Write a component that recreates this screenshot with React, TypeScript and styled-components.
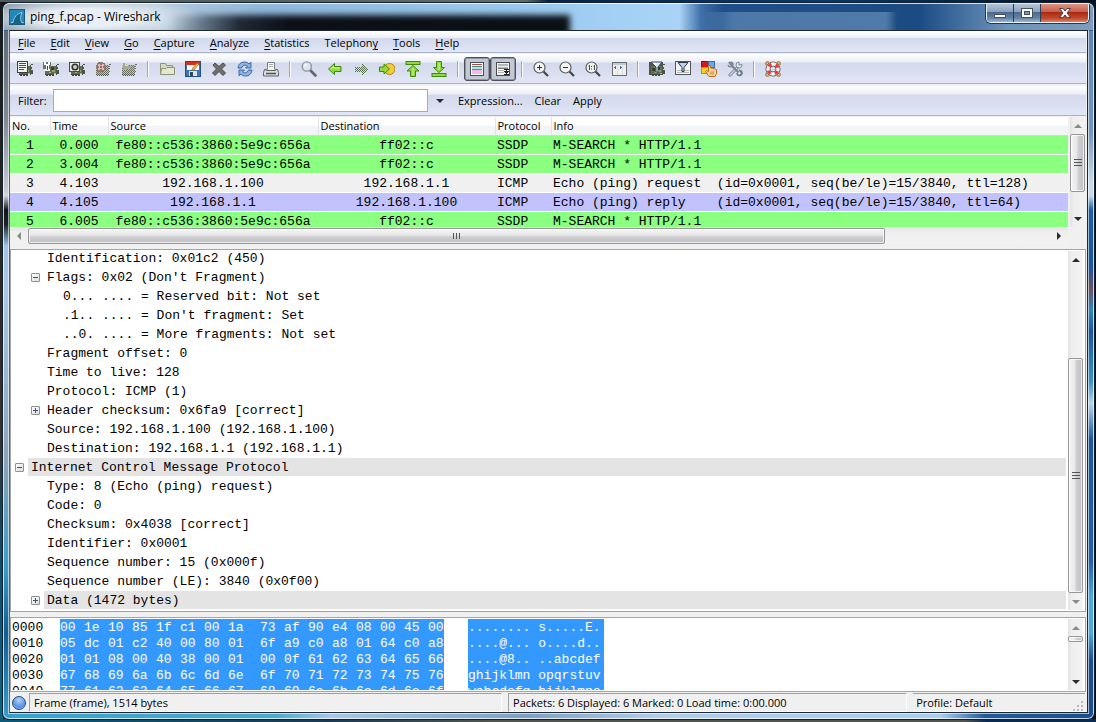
import React from "react";
import styled, { createGlobalStyle, css } from "styled-components";

const ui = `"Open Sans", "Noto Sans", sans-serif`;
const mono = `"Liberation Mono", "Courier New", monospace`;

const GlobalStyle = createGlobalStyle`
  * { box-sizing: border-box; }
  body { margin: 0; background: #05080f; font: 11px/16px ${ui}; color: #000; }
  button, input { font: inherit; color: inherit; }
`;

/* ---------- window frame ---------- */

const Desktop = styled.div`
  height: 100vh;
  min-height: 480px;
  padding: 2px 1px 2px 2px;
  background:
    linear-gradient(90deg, #4d5a5c, #5f6c6c 48%, #04234a 50%, #0a3a6a 75%, #03101f) 0 0 / 100% 2px no-repeat,
    linear-gradient(90deg, #0a5a78, #1b3a52 30%, #50564f 45%, #50564f 88%, #0a2a50 90%) 0 100% / 100% 3px no-repeat,
    linear-gradient(#1a1a1a, #333 60%, #0d4d6d 78%, #0b6484) 0 0 / 3px 100% no-repeat,
    #061022;
`;

const Window = styled.div`
  height: 100%;
  display: flex;
  flex-direction: column;
  padding: 0 6px 6px 6px;
  border: 1px solid #16202b;
  border-radius: 7px;
  box-shadow: inset 0 0 0 1px rgba(255, 255, 255, 0.75);
  background:
    linear-gradient(#5f6b78, #7e8892 12%, #c2c9d1 22%, #cfd6de 23%, #10141b 25%, #1a222c 27%, #9fc3e4 30%, #a9c8e6 36%, #8aa4ba 60%, #3c9cc9 75%, #0d5f94 84%, #48b0dc) 0 28px / 9px 100% no-repeat,
    linear-gradient(#5f86b0, #7496bd 14%, #c8d8ea 21%, #c8d8ea 23%, #1b5ea2 25%, #1b5799 33%, #6a5060 36%, #2f86b8 39%, #1b5799 42%, #3a93c4 49%, #b8d4ea 52%, #1d579a 57%, #2460a8 74%, #4fa8d8 79%, #4fa8d8 84%, #1b4f8c 88%) 100% 28px / 9px 100% no-repeat,
    linear-gradient(90deg, #2fa6d0, #49a9d0 25%, #a4c8e6 30%, #7ba1c0 48%, #b0cdea 60%, #a8cdf0 86%, #1f5c9c 90%, #1b4f8c) 0 100% / 100% 12px no-repeat,
    #345f92;
`;

const TitleBar = styled.header`
  position: relative;
  flex: none;
  height: 27px;
  margin: 0 -5px;
  padding: 0 4px 0 5px;
  display: flex;
  align-items: center;
  gap: 5px;
  overflow: hidden;
  border-top: 1px solid rgba(255, 255, 255, 0.8);
  border-radius: 6px 6px 0 0;
  background:
    radial-gradient(ellipse 120px 22px at 82px 14px, rgba(236, 242, 248, 0.95) 40%, rgba(226, 235, 244, 0) 100%),
    linear-gradient(90deg, transparent 64%, rgba(122, 160, 198, 0.5) 67%, rgba(122, 160, 198, 0.55) 81%, transparent 82%) 0 100% / 100% 18px no-repeat,
    linear-gradient(90deg, #7d8c9a, #b4c8da 14%, #8fb8dc 24%, #9ccbef 50%, #a9d4f7 62%, #3f70a8 64%, #1f4f8a 66%, #1c4b84 84%, #6c93bb 92%, #7f9cba);
  &::after {
    content: "";
    position: absolute;
    inset: 11px 48% -8px 15%;
    background: linear-gradient(90deg, rgba(11, 16, 23, 0), rgba(11, 16, 23, 0.85) 18%, #0b1017 30%);
    filter: blur(3px);
  }
`;

const Title = styled.h1`
  position: relative;
  z-index: 1;
  margin: 0;
  font: 12px/16px ${ui};
`;

const Captions = styled.div`
  margin-left: auto;
  align-self: flex-start;
  display: flex;
  height: 20px;
  margin-top: -1px;
  border: 1px solid #e8f0f8;
  border-top: 0;
  border-radius: 0 0 5px 5px;
  box-shadow: 0 0 0 1px #26374c;
  overflow: hidden;
`;

const CaptionButton = styled.button<{ $close?: boolean }>`
  width: ${(p) => (p.$close ? 47 : 27)}px;
  padding: 0;
  display: grid;
  place-items: center;
  border: 0;
  border-right: ${(p) => (p.$close ? 0 : 1)}px solid #2a3d54;
  background: ${(p) =>
    p.$close
      ? "linear-gradient(#dd9c8e, #c9604a 45%, #a92a12 50%, #c04a2c 80%, #e0806a)"
      : "linear-gradient(#b9c9da, #8ba3bd 45%, #4c6a8c 50%, #6585a8 80%, #9db8d4)"};
`;

const Client = styled.main`
  flex: 1;
  min-height: 0;
  display: flex;
  flex-direction: column;
  border: 1px solid #1d2733;
  border-left-color: #55606c;
  outline: 1px solid rgba(255, 255, 255, 0.6);
  background: #f0f0f0;
  padding: 0 1px 0 0;
`;

/* ---------- bars ---------- */

const barSkin = css`
  flex: none;
  display: flex;
  align-items: center;
  border-bottom: 1px solid #a9b2c8;
  background: linear-gradient(#ffffff, #e9edf6 29%, #d3d9ec 30%, #d8deef 60%, #e1e7f6);
`;

const MenuBar = styled.nav`
  ${barSkin}
  height: 22px;
  padding: 2px 0 0 1px;
  gap: 1px;
  border-top: 1px solid #fff;
`;

const MenuItem = styled.button`
  padding: 0 7px;
  border: 0;
  background: none;
  line-height: 18px;
  u { text-underline-offset: 2px; }
`;

const ToolBar = styled.div`
  ${barSkin}
  height: 30px;
  margin-top: 1px;
  padding: 1px 0 0 2px;
`;

const ToolButton = styled.button<{ $pressed?: boolean }>`
  width: 26px;
  height: 24px;
  padding: 0;
  display: grid;
  place-items: center;
  border: ${(p) => (p.$pressed ? "1px solid #4c5058" : "0")};
  border-radius: 3px;
  background: ${(p) => (p.$pressed ? "#c3c8d6" : "none")};
  box-shadow: ${(p) => (p.$pressed ? "inset 0 0 0 1px #8f95a3" : "none")};
  svg { display: block; }
`;

const Separator = styled.span`
  width: 2px;
  height: 16px;
  margin: 0 5px;
  border-left: 1px solid #a3a5ad;
  border-right: 1px solid #fff;
`;

const FilterBar = styled.form`
  ${barSkin}
  height: 30px;
  margin-top: 2px;
  padding: 0 0 0 8px;
`;

const FilterLabel = styled.label`
  width: 35px;
`;

const FilterInput = styled.input`
  flex: 0 1 375px;
  min-width: 80px;
  height: 23px;
  border: 1px solid #a9aab0;
  border-radius: 0;
  padding: 0 4px;
  background: #fff;
`;

const FilterButton = styled.button`
  padding: 0 6px;
  border: 0;
  background: none;
`;

const DropButton = styled(FilterButton)`
  width: 24px;
  display: grid;
  place-items: center;
`;

/* ---------- scroll bars ---------- */

const VBar = styled.div`
  flex: none;
  width: 15px;
  display: flex;
  flex-direction: column;
  background: linear-gradient(90deg, #e3e3e3, #eeeeee 25%, #f2f2f2);
`;

const HBar = styled.div`
  flex: none;
  height: 16px;
  display: flex;
  background: linear-gradient(#e6e6e6, #eeeeee 25%, #f2f2f2);
`;

const ScrollArrow = styled.button`
  flex: none;
  width: 18px;
  height: 17px;
  padding: 0;
  border: 0;
  display: grid;
  place-items: center;
  background: none;
  align-self: center;
`;

const Thumb = styled.div<{ $vertical?: boolean; $grow?: number }>`
  flex: ${(p) => p.$grow ?? 0} 0 ${(p) => (p.$grow ? 0 : 6)}px;
  display: grid;
  place-items: center;
  border: 1px solid #979797;
  border-radius: 2px;
  box-shadow: inset 0 0 0 1px rgba(255, 255, 255, 0.7);
  background: linear-gradient(${(p) => (p.$vertical ? "90deg" : "180deg")}, #f5f5f5, #e6e6e7 45%, #d0d0d3 55%, #bfbfc4);
`;

const Track = styled.div<{ $grow: number }>`
  flex: ${(p) => p.$grow} 0 0;
`;

const Arrow = ({ dir, dim }: { dir: "up" | "down" | "left" | "right"; dim?: boolean }) => {
  const d = {
    up: "M0 6L4 2L8 6Z",
    down: "M0 2L4 6L8 2Z",
    left: "M6 0L2 4L6 8Z",
    right: "M2 0L6 4L2 8Z",
  }[dir];
  return (
    <svg width="8" height="8" viewBox="0 0 8 8">
      <path d={d} fill={dim ? "#8a8a8a" : "#2b2b2b"} />
    </svg>
  );
};

const Grip = ({ vertical }: { vertical?: boolean }) => (
  <svg width="8" height="8" viewBox="0 0 8 8" shapeRendering="crispEdges">
    {[0, 3, 6].map((n) =>
      vertical ? (
        <path key={n} d={`M0 ${n}.5h8`} stroke="#555" />
      ) : (
        <path key={n} d={`M${n}.5 1v6`} stroke="#555" />
      )
    )}
  </svg>
);

/* ---------- packet list ---------- */

const PacketArea = styled.section`
  flex: none;
  margin-top: 1px;
  padding-right: 1px;
  display: flex;
  gap: 2px;
  height: 110px;
`;

const PacketClip = styled.div`
  flex: 1;
  min-width: 0;
  overflow: hidden;
  background: #fff;
`;

const PacketTable = styled.table`
  width: 100%;
  table-layout: fixed;
  border-collapse: collapse;
  th {
    height: 18px;
    padding: 0 2px;
    font-weight: normal;
    text-align: left;
    border-right: 1px solid #e2e3e6;
    border-bottom: 1px solid #d5d5d5;
    background: linear-gradient(#fff 45%, #f3f4f6 50%, #f3f4f6);
  }
  th:last-child { border-right: 0; }
  td {
    height: 19px;
    padding: 2px 2px 0;
    border-bottom: 1px solid #fff;
    font: 13px/16px ${mono};
    white-space: pre;
    overflow: hidden;
  }
  td:nth-child(-n + 4) { text-align: center; padding: 2px 0 0; }
`;

const PacketRow = styled.tr<{ $tone: string }>`
  background: ${(p) => p.$tone};
`;

const HScrollRow = styled.div`
  flex: none;
  padding: 1px 18px 0 0;
`;

/* ---------- panes ---------- */

const Pane = styled.section`
  display: flex;
  border: 1px solid #a4a5ab;
  background: #fff;
  overflow: hidden;
  padding: 1px 2px 1px 0;
`;

const TreePane = styled(Pane)`
  flex: 1;
  min-height: 0;
  margin-top: 5px;
`;

const HexPane = styled(Pane)`
  flex: none;
  height: 75px;
  margin-top: 5px;
`;

const TreeList = styled.ul`
  flex: 1;
  min-width: 0;
  margin: 0 2px 0 0;
  padding: 0;
  list-style: none;
  display: flex;
  flex-direction: column;
  justify-content: flex-end;
  overflow: hidden;
`;

const TreeItem = styled.li<{ $level: number }>`
  flex: none;
  height: 18px;
  margin-bottom: 1px;
  display: flex;
  align-items: center;
  padding-left: ${(p) => p.$level * 16}px;
`;

const ExpanderSlot = styled.span`
  flex: none;
  width: 17px;
  display: grid;
  place-items: center;
`;

const Expander = styled.button`
  width: 9px;
  height: 9px;
  padding: 0;
  border: 1px solid #919191;
  border-radius: 1px;
  background: linear-gradient(135deg, #fff, #dcdcdc);
  svg { display: block; }
`;

const TreeText = styled.span<{ $marked?: boolean }>`
  flex: 1;
  padding: 2px 0 0 3px;
  background: ${(p) => (p.$marked ? "#e4e4e4" : "transparent")};
  font: 13px/16px ${mono};
  white-space: pre;
`;

const HexRows = styled.div`
  flex: 1;
  min-width: 0;
  overflow: hidden;
  padding-left: 1px;
`;

const HexRow = styled.div`
  display: flex;
  font: 13px/14px ${mono};
  white-space: pre;
`;

const Offset = styled.span`
  width: 48px;
  padding-top: 2px;
`;

const Bytes = styled.span`
  display: flex;
  width: 384px;
  margin-right: 24px;
  padding-top: 2px;
  background: #3399ff;
  color: #fff;
`;

const Byte = styled.span`
  width: 24px;
  &:nth-child(8) { width: 32px; }
  &:last-child { width: 16px; }
`;

const Ascii = styled.span`
  width: 136px;
  padding-top: 2px;
  background: #3399ff;
  color: #fff;
`;

/* ---------- status bar ---------- */

const StatusBar = styled.footer`
  flex: none;
  height: 20px;
  padding: 1px 1px 0 2px;
  display: flex;
  align-items: stretch;
`;

const ExpertButton = styled.button`
  align-self: center;
  width: 14px;
  height: 14px;
  margin: 0 3px 0 0;
  padding: 0;
  border: 1px solid #2e4a80;
  border-radius: 50%;
  background: radial-gradient(circle at 50% 25%, #b5d3fa, #5b95e6 60%, #6ea8f2);
`;

const StatusField = styled.div<{ $grow: number; $pad: number }>`
  flex: ${(p) => p.$grow} 1 0;
  min-width: 0;
  margin-right: 6px;
  padding-left: ${(p) => p.$pad}px;
  display: flex;
  justify-content: space-between;
  line-height: 17px;
  white-space: nowrap;
  border: 1px solid #a0a0a0;
  border-right-color: #fff;
  border-bottom-color: #fff;
  &:last-child { margin-right: 0; border-left: 0; border-right: 0; }
`;

/* ---------- icons ---------- */

const Svg = ({ children, crisp }: { children: React.ReactNode; crisp?: boolean }) => (
  <svg width="16" height="16" viewBox="0 0 16 16" fill="none" shapeRendering={crisp ? "crispEdges" : "auto"}>
    {children}
  </svg>
);

const Card = () => (
  <>
    <path d="M2 5h11v8H2z" fill="#5d7048" />
    <path d="M3 7h3v3H3zM8 6h3v3H8z" fill="#36402c" />
    <path d="M9 9h3v2H9z" fill="#8fa070" />
    <path d="M13 4h1v10h-1zM14 3h2v1h-2zM14 6h1v2h-1zM14 9h2v4h-2z" fill="#4f534d" />
    <path d="M2 13h9v2H9v-1H8v1H6v-1H5v1H3v-1H2z" fill="#45493c" />
    <path d="M11 12h2v1h-2zM6 11h2v1H6z" fill="#a9b48c" />
  </>
);

const Faded = () => (
  <>
    <path d="M1 4h13v10H1z" fill="#a7aaa4" fillOpacity="0.55" />
    {Array.from({ length: 11 }, (_, y) =>
      Array.from({ length: 13 }, (_, x) =>
        (x + y) % 2 && y + x > 1 ? (
          <path key={`${x}-${y}`} d={`M${x + 1} ${y + 4}h1v1h-1z`} fill={y > 8 ? "#4a4d42" : "#6c6f62"} />
        ) : null
      )
    )}
    <path d="M14 3h2v1h-2zM14 5h1v1h-1zM14 7h1v1h-1zM14 10h1v1h-1z" fill="#6c6f62" />
  </>
);

const IconInterfaces = () => (
  <Svg crisp>
    <Card />
    <path d="M0 0h11v12H0z" fill="#3c3f3c" />
    <path d="M1 1h9v10H1z" fill="#f2f4ef" />
    <path d="M2 2h7v1H2zM2 4h7v1H2zM2 6h7v1H2zM2 8h5v1H2z" fill="#4c504a" />
  </Svg>
);
const IconOptions = () => (
  <Svg crisp>
    <Card />
    <path d="M0 1h8v7H0z" fill="#6f736b" />
    <path d="M1 1h2v2H1zM5 1h2v2H5zM1 3h6v1H1zM3 4h3v4H3zM2 8h5v2H2z" fill="#fff" />
    <path d="M4 5h1v4H4z" fill="#444" />
  </Svg>
);
const IconStart = () => (
  <Svg>
    <Card />
    <rect x="0.5" y="1.5" width="10" height="9" fill="#e4e7e0" stroke="#4a4e48" />
    <circle cx="6" cy="6" r="3.6" fill="#2f332d" />
    <circle cx="6" cy="6" r="2" fill="#c9cdc4" />
  </Svg>
);
const IconStop = () => (
  <Svg crisp>
    <Faded />
    <path d="M3 1h5v1h2v2h1v4h-1v2H8v1H3v-1H2V8H1V4h1V2h1z" fill="#8b7a74" />
    <path d="M3 3h2v1h2V3h2v2H8v2h1v2H7V8H5v1H3V7h1V5H3z" fill="#e8b9ae" />
    <path d="M5 5h2v2H5z" fill="#c05a48" />
  </Svg>
);
const IconRestart = () => (
  <Svg crisp>
    <Faded />
    <path d="M2 2h2v1h2v1h2v1h2v2H8v1H6v1H2z" fill="#a7a796" />
    <path d="M4 3h1v1h2v1H4z" fill="#e7dfa8" />
  </Svg>
);
const IconOpen = () => (
  <Svg>
    <path d="M1.500 13.500V2.500h5l1 2h6v3" fill="#d4d9bd" stroke="#8e947c" />
    <path d="M1.500 13.500l1-6h4.500l1-1h7.500v7z" fill="#e3e7d0" stroke="#8e947c" />
  </Svg>
);
const IconSave = () => (
  <Svg>
    <rect x="0.5" y="0.500" width="15" height="15" fill="#3f74b5" stroke="#24508a" />
    <rect x="2" y="1" width="12" height="8" fill="#fff" />
    <rect x="1" y="1" width="14" height="3" fill="#d8301f" />
    <path d="M7 8l5-6 2 1-5 6-2 .5z" fill="#f0b545" stroke="#8a5a20" strokeWidth="0.6" />
    <rect x="4" y="10" width="8" height="5" fill="#dfe3e8" />
    <rect x="5" y="11" width="3" height="4" fill="#33475f" />
  </Svg>
);
const IconClose = () => (
  <Svg>
    <path d="M2 4l2-2 4 3.500L12 2l2.500 2-4 4 4 4-2.500 2.500-4-4-4 4L1.500 12l4-4z" fill="#6e706e" stroke="#4a4c4a" />
  </Svg>
);
const IconReload = () => (
  <Svg>
    <path d="M1 7c.5-4 3-6 6.500-6C9.500 1 11 1.700 12 3l2-1.700V7H8.500L10.500 5C9.500 3.800 6 3.500 4.500 7z" fill="#8db4e2" stroke="#2e5c9e" strokeWidth="0.900" />
    <path d="M15 9c-.5 4-3 6-6.500 6-2 0-3.500-.7-4.500-2l-2 1.700V9h5.500L5.500 11c1 1.200 4.500 1.500 6-2z" fill="#8db4e2" stroke="#2e5c9e" strokeWidth="0.900" />
  </Svg>
);
const IconPrint = () => (
  <Svg>
    <path d="M4.500 8.500V1.500h7v7" fill="#fff" stroke="#77797b" />
    <path d="M6 3.500h4M6 5.500h4" stroke="#aaa" />
    <path d="M1.500 8.500h2v1h9v-1h2l1 3v3.500H.5V11.500z" fill="#dadcdd" stroke="#606264" />
    <path d="M3 12.500h10" stroke="#505254" strokeWidth="1.500" />
  </Svg>
);
const IconFind = () => (
  <Svg>
    <path d="M9 9l5.500 5.500" stroke="#666" strokeWidth="2.600" strokeLinecap="round" />
    <circle cx="5.800" cy="5.500" r="4.600" fill="#d8e6f5" stroke="#8f9499" strokeWidth="1.400" />
    <path d="M3.500 5.500c0-1.500 1-2.400 2.400-2.400" stroke="#fff" strokeWidth="1.200" />
  </Svg>
);
const green = { fill: "#8edb3a", stroke: "#3f8a0c" };
const IconBack = () => (
  <Svg><path d="M1.500 8L7.500 2.500V5.500H14V10.500H7.500V13.500Z" {...green} /><path d="M3.500 8l3-2.500V7H12.500" stroke="#d3f5a0" /></Svg>
);
const IconForward = () => (
  <Svg crisp>
    {Array.from({ length: 11 }, (_, r) =>
      Array.from({ length: 13 }, (_, x) => {
        const dy = Math.abs(r - 5);
        const inside = x < 7 ? dy <= 2 : dy <= 12 - x;
        return inside && (x + r) % 2 ? <path key={`${x}-${r}`} d={`M${x + 2} ${r + 3}h1v1h-1z`} fill="#55704a" /> : null;
      })
    )}
  </Svg>
);
const IconGoto = () => (
  <Svg>
    <circle cx="10.500" cy="8" r="5.500" fill="#f3cb3c" stroke="#a88618" />
    <path d="M.5 6H5V3l5.500 5L5 13V10.500H.5Z" {...green} />
  </Svg>
);
const IconTop = () => (
  <Svg><rect x="1" y="0.500" width="14" height="3" {...green} /><path d="M8 4.500L14 10H10.500V15.500H5.500V10H2Z" {...green} /><path d="M8 7v7" stroke="#d3f5a0" /></Svg>
);
const IconBottom = () => (
  <Svg><rect x="1" y="12.500" width="14" height="3" {...green} /><path d="M8 11.500L13.500 6.500H10.500V.5H5.500V6.500H2.500Z" {...green} /><path d="M8 2v7" stroke="#d3f5a0" /></Svg>
);
const IconColorize = () => (
  <Svg crisp>
    <path d="M1 1h14v14H1z" fill="#4a4c4e" /><path d="M2 2h12v12H2z" fill="#fff" />
    <path d="M3 3h10v1H3z" fill="#c0413a" /><path d="M3 5h10v1H3z" fill="#3d8d87" />
    <path d="M3 6h10v2H3z" fill="#b8e0dc" /><path d="M3 8h10v1H3z" fill="#8d6c9c" /><path d="M3 9h10v4H3z" fill="#f0b9ee" />
  </Svg>
);
const IconAutoScroll = () => (
  <Svg crisp>
    <path d="M1 1h14v14H1z" fill="#4a4c4e" /><path d="M2 2h12v12H2z" fill="#f2f2f2" />
    <path d="M3 3h10v2H3zM3 6h10v1H3z" fill="#b4b6b8" /><path d="M3 7h10v1H3z" fill="#777" />
    <path d="M3 9h6v1H3zM3 11h6v1H3z" fill="#b4b6b8" />
    <path d="M9 8h5v1H9zM11 9h1v2h-1zM9 10h5v1h-1v1h-3v-1H9zM9 13h5v1H9zM11 12h1v1h-1z" fill="#222" />
  </Svg>
);
const Lens = ({ children }: { children: React.ReactNode }) => (
  <Svg>
    <path d="M10.500 10.500l4.500 4.500" stroke="#444648" strokeWidth="2.200" />
    <circle cx="6.500" cy="6.500" r="5.500" fill="#f3f4ef" stroke="#5b5e60" strokeWidth="1.200" />
    {children}
  </Svg>
);
const IconZoomIn = () => <Lens><path d="M4 6.500h5M6.500 4v5" stroke="#333" /></Lens>;
const IconZoomOut = () => <Lens><path d="M4 6.500h5" stroke="#333" /></Lens>;
const IconZoomOne = () => <Lens><path d="M3.500 5l1-.6V9M8.500 5l1-.6V9M6.500 5v1M6.500 7.500v1" stroke="#333" strokeWidth="0.900" /></Lens>;
const IconResize = () => (
  <Svg crisp>
    <path d="M1 1h15v14H1z" fill="#6a6d70" /><path d="M2 4h13v10H2z" fill="#f0f1ee" /><path d="M2 2h13v2H2z" fill="#c5c8cb" />
    <path d="M6 4h1v10H6zM11 4h1v10h-1z" fill="#dcdedc" />
    <path d="M3 6h1V5h1v3H4V7H3zM8 7h1V5h1v1h1v1h-1v1H9V7z" fill="#3d6ea6" />
  </Svg>
);
const Funnel = () => (
  <>
    <path d="M2 1h11L9 6v5H7V6z" fill="#dcebf8" stroke="#3d4a58" />
    <path d="M4 2h4L6.500 4.500z" fill="#fff" />
  </>
);
const IconCaptureFilter = () => (
  <Svg>
    <path d="M0 1h14v13H0z" fill="#50564c" />
    <Card />
    <Funnel />
  </Svg>
);
const IconDisplayFilter = () => (
  <Svg>
    <rect x="0.500" y="0.500" width="15" height="13" fill="#f4f4f2" stroke="#55585a" />
    <path d="M2 9.500h12M2 11.500h12" stroke="#b8babb" />
    <path d="M3 1.500h10L9 6.500V10.500H7V6.500z" fill="#b9d5ee" stroke="#2d3945" />
  </Svg>
);
const IconColorRules = () => (
  <Svg>
    <rect x="0.500" y="0.500" width="7" height="6" fill="#d8141c" stroke="#8e1218" />
    <rect x="7.500" y="0.500" width="6" height="6" fill="#6ea6e8" stroke="#3c6cb0" />
    <rect x="0.500" y="6.500" width="7" height="6" fill="#f5d21c" stroke="#b8960c" />
    <path d="M7.500 4.500v6L5.500 9.500l-1 1 3.500 5h6l1.500-3V8.500l-2-.8-2-.5L9.500 7V4.500z" fill="#f8cf94" stroke="#b5701c" />
    <path d="M10 10.500v3M12 10.500v3" stroke="#b5701c" strokeWidth="0.800" />
  </Svg>
);
const IconPrefs = () => (
  <Svg>
    <path d="M3 14L11.500 5.500" stroke="#6d7f92" strokeWidth="3" strokeLinecap="round" />
    <path d="M3 14L11.500 5.500" stroke="#c9daea" strokeWidth="1.400" strokeLinecap="round" />
    <path d="M15 3.500a3 3 0 1 1-3-2.500v3z" fill="#dde5ec" stroke="#77828c" strokeWidth="0.900" />
    <path d="M2 1l3 3.500M4.500 4.500l7 7" stroke="#7d858c" strokeWidth="2.200" />
    <path d="M1 4a2.500 2.500 0 1 0 3-3" stroke="#7d858c" strokeWidth="1.300" />
    <path d="M10 12a2.500 2.500 0 1 0 3-2.500l2 3-2 1.500" stroke="#6f777e" strokeWidth="1.500" />
  </Svg>
);
const IconHelp = () => (
  <Svg>
    <path d="M1 1h3M1 1v3M15 1h-3M15 1v3M1 15h3M1 15v-3M15 15h-3M15 15v-3" stroke="#b88a4a" strokeWidth="1.600" />
    <circle cx="8" cy="8" r="5" stroke="#555" strokeWidth="5" />
    <circle cx="8" cy="8" r="5" stroke="#f2f2f0" strokeWidth="3.400" />
    <circle cx="8" cy="8" r="5" stroke="#f0383a" strokeWidth="3.400" strokeDasharray="3.400 4.454" strokeDashoffset="-2.227" />
  </Svg>
);

const AppIcon = () => (
  <svg width="16" height="16" viewBox="0 0 16 16">
    <rect x="0.500" y="0.500" width="15" height="15" fill="#2188b8" stroke="#155b80" />
    <path d="M1 15L4 14C5 8 7 4 13.500 3C11.500 6 11.500 10 13.500 14L15 15Z" fill="#176287" />
    <path d="M2 13.500H4C5 8 7.500 4.500 13 3.500C11.300 7 11.300 10 12.500 13.500H14.500" fill="none" stroke="#8fd2ee" />
  </svg>
);

/* ---------- data ---------- */

const menus: [string, string, string][] = [
  ["", "F", "ile"], ["", "E", "dit"], ["", "V", "iew"], ["", "G", "o"], ["", "C", "apture"], ["", "A", "nalyze"],
  ["", "S", "tatistics"], ["Telephon", "y", ""], ["", "T", "ools"], ["", "H", "elp"],
];

type Tool = { label: string; icon: React.FC; pressed?: boolean };
const toolGroups: Tool[][] = [
  [
    { label: "List interfaces", icon: IconInterfaces },
    { label: "Capture options", icon: IconOptions },
    { label: "Start capture", icon: IconStart },
    { label: "Stop capture", icon: IconStop },
    { label: "Restart capture", icon: IconRestart },
  ],
  [
    { label: "Open", icon: IconOpen },
    { label: "Save", icon: IconSave },
    { label: "Close", icon: IconClose },
    { label: "Reload", icon: IconReload },
    { label: "Print", icon: IconPrint },
  ],
  [
    { label: "Find packet", icon: IconFind },
    { label: "Back", icon: IconBack },
    { label: "Forward", icon: IconForward },
    { label: "Go to packet", icon: IconGoto },
    { label: "First packet", icon: IconTop },
    { label: "Last packet", icon: IconBottom },
  ],
  [
    { label: "Colorize", icon: IconColorize, pressed: true },
    { label: "Auto scroll", icon: IconAutoScroll, pressed: true },
  ],
  [
    { label: "Zoom in", icon: IconZoomIn },
    { label: "Zoom out", icon: IconZoomOut },
    { label: "Normal size", icon: IconZoomOne },
    { label: "Resize columns", icon: IconResize },
  ],
  [
    { label: "Capture filters", icon: IconCaptureFilter },
    { label: "Display filters", icon: IconDisplayFilter },
    { label: "Coloring rules", icon: IconColorRules },
    { label: "Preferences", icon: IconPrefs },
  ],
  [{ label: "Help", icon: IconHelp }],
];

const GREEN = "#8aff80";
const packets: [string, string[]][] = [
  [GREEN, ["1", "0.000", "fe80::c536:3860:5e9c:656a", "ff02::c", "SSDP", "M-SEARCH * HTTP/1.1"]],
  [GREEN, ["2", "3.004", "fe80::c536:3860:5e9c:656a", "ff02::c", "SSDP", "M-SEARCH * HTTP/1.1"]],
  ["#f0f0f0", ["3", "4.103", "192.168.1.100", "192.168.1.1", "ICMP", "Echo (ping) request  (id=0x0001, seq(be/le)=15/3840, ttl=128)"]],
  ["#c2c2ff", ["4", "4.105", "192.168.1.1", "192.168.1.100", "ICMP", "Echo (ping) reply    (id=0x0001, seq(be/le)=15/3840, ttl=64)"]],
  [GREEN, ["5", "6.005", "fe80::c536:3860:5e9c:656a", "ff02::c", "SSDP", "M-SEARCH * HTTP/1.1"]],
];

type Node = { level: number; text: string; toggle?: "+" | "-"; marked?: boolean };
const tree: Node[] = [
  { level: 1, text: "Identification: 0x01c2 (450)" },
  { level: 1, text: "Flags: 0x02 (Don't Fragment)", toggle: "-" },
  { level: 2, text: "0... .... = Reserved bit: Not set" },
  { level: 2, text: ".1.. .... = Don't fragment: Set" },
  { level: 2, text: "..0. .... = More fragments: Not set" },
  { level: 1, text: "Fragment offset: 0" },
  { level: 1, text: "Time to live: 128" },
  { level: 1, text: "Protocol: ICMP (1)" },
  { level: 1, text: "Header checksum: 0x6fa9 [correct]", toggle: "+" },
  { level: 1, text: "Source: 192.168.1.100 (192.168.1.100)" },
  { level: 1, text: "Destination: 192.168.1.1 (192.168.1.1)" },
  { level: 0, text: "Internet Control Message Protocol", toggle: "-", marked: true },
  { level: 1, text: "Type: 8 (Echo (ping) request)" },
  { level: 1, text: "Code: 0" },
  { level: 1, text: "Checksum: 0x4038 [correct]" },
  { level: 1, text: "Identifier: 0x0001" },
  { level: 1, text: "Sequence number: 15 (0x000f)" },
  { level: 1, text: "Sequence number (LE): 3840 (0x0f00)" },
  { level: 1, text: "Data (1472 bytes)", toggle: "+", marked: true },
];

const hex = [
  ["0000", "00 1e 10 85 1f c1 00 1a 73 af 90 e4 08 00 45 00", "........ s.....E."],
  ["0010", "05 dc 01 c2 40 00 80 01 6f a9 c0 a8 01 64 c0 a8", "....@... o....d.."],
  ["0020", "01 01 08 00 40 38 00 01 00 0f 61 62 63 64 65 66", "....@8.. ..abcdef"],
  ["0030", "67 68 69 6a 6b 6c 6d 6e 6f 70 71 72 73 74 75 76", "ghijklmn opqrstuv"],
  ["0040", "77 61 62 63 64 65 66 67 68 69 6a 6b 6c 6d 6e 6f", "wabcdefg hijklmno"],
];

export default function App() {
  return (
    <Desktop>
      <GlobalStyle />
      <Window>
        <TitleBar>
          <AppIcon />
          <Title>ping_f.pcap - Wireshark</Title>
          <Captions>
            <CaptionButton aria-label="Minimize">
              <svg width="12" height="14" viewBox="0 0 12 14"><rect x="0.500" y="8.500" width="11" height="3" fill="#fff" stroke="#44505e" /></svg>
            </CaptionButton>
            <CaptionButton aria-label="Maximize">
              <svg width="12" height="12" viewBox="0 0 12 12">
                <rect x="0.500" y="1.500" width="11" height="9" fill="#fff" stroke="#44505e" />
                <rect x="3.500" y="4.500" width="5" height="3" fill="#7b95b2" stroke="#44505e" />
              </svg>
            </CaptionButton>
            <CaptionButton $close aria-label="Close window">
              <svg width="12" height="12" viewBox="0 0 12 12">
                <path d="M0.500 1.500h3.500l2 2.500 2-2.500h3.500L8 6l3.500 4.500H8L6 8l-2 2.500H.5L4 6z" fill="#fff" stroke="#4d4048" />
              </svg>
            </CaptionButton>
          </Captions>
        </TitleBar>
        <Client>
          <MenuBar aria-label="Main menu">
            {menus.map(([a, key, b]) => (
              <MenuItem key={a + key + b}>{a}<u>{key}</u>{b}</MenuItem>
            ))}
          </MenuBar>
          <ToolBar role="toolbar">
            {toolGroups.map((group, i) => (
              <React.Fragment key={i}>
                {i > 0 && <Separator />}
                {group.map(({ label, icon: Icon, pressed }) => (
                  <ToolButton key={label} aria-label={label} $pressed={pressed} aria-pressed={pressed}>
                    <Icon />
                  </ToolButton>
                ))}
              </React.Fragment>
            ))}
          </ToolBar>
          <FilterBar onSubmit={(e) => e.preventDefault()}>
            <FilterLabel htmlFor="filter">Filter:</FilterLabel>
            <FilterInput id="filter" type="text" />
            <DropButton type="button" aria-label="Recent filters"><Arrow dir="down" /></DropButton>
            <FilterButton type="button">Expression...</FilterButton>
            <FilterButton type="reset">Clear</FilterButton>
            <FilterButton type="submit">Apply</FilterButton>
          </FilterBar>
          <PacketArea>
            <PacketClip>
              <PacketTable>
                <colgroup>
                  <col width="40" /><col width="58" /><col width="210" /><col width="177" /><col width="56" /><col />
                </colgroup>
                <thead>
                  <tr>{["No.", "Time", "Source", "Destination", "Protocol", "Info"].map((h) => <th key={h}>{h}</th>)}</tr>
                </thead>
                <tbody>
                  {packets.map(([tone, cells]) => (
                    <PacketRow key={cells[0]} $tone={tone}>
                      {cells.map((c, i) => <td key={i}>{c}</td>)}
                    </PacketRow>
                  ))}
                </tbody>
              </PacketTable>
            </PacketClip>
            <VBar>
              <ScrollArrow aria-label="Scroll up"><Arrow dir="up" dim /></ScrollArrow>
              <Thumb $vertical $grow={57}><Grip vertical /></Thumb>
              <Track $grow={18} />
              <ScrollArrow aria-label="Scroll down"><Arrow dir="down" /></ScrollArrow>
            </VBar>
          </PacketArea>
          <HScrollRow>
            <HBar>
              <ScrollArrow aria-label="Scroll left"><Arrow dir="left" dim /></ScrollArrow>
              <Thumb $grow={857}><Grip /></Thumb>
              <Track $grow={165} />
              <ScrollArrow aria-label="Scroll right"><Arrow dir="right" /></ScrollArrow>
            </HBar>
          </HScrollRow>
          <TreePane>
            <TreeList>
              {tree.map((n) => (
                <TreeItem key={n.text} $level={n.level}>
                  <ExpanderSlot>
                    {n.toggle && (
                      <Expander aria-label={n.toggle === "+" ? "Expand" : "Collapse"}>
                        <svg width="7" height="7" viewBox="0 0 7 7" shapeRendering="crispEdges">
                          <path d={n.toggle === "+" ? "M1 3.500h5M3.500 1v5" : "M1 3.500h5"} stroke="#3b4f9c" />
                        </svg>
                      </Expander>
                    )}
                  </ExpanderSlot>
                  <TreeText $marked={n.marked}>{n.text}</TreeText>
                </TreeItem>
              ))}
            </TreeList>
            <VBar>
              <ScrollArrow aria-label="Scroll up"><Arrow dir="up" /></ScrollArrow>
              <Track $grow={91} />
              <Thumb $vertical $grow={234}><Grip vertical /></Thumb>
              <ScrollArrow aria-label="Scroll down"><Arrow dir="down" dim /></ScrollArrow>
            </VBar>
          </TreePane>
          <HexPane>
            <HexRows>
              {hex.map(([offset, bytes, ascii]) => (
                <HexRow key={offset}>
                  <Offset>{offset}</Offset>
                  <Bytes>
                    {bytes.split(" ").map((b, i) => <Byte key={i}>{b}</Byte>)}
                  </Bytes>
                  <Ascii>{ascii}</Ascii>
                </HexRow>
              ))}
            </HexRows>
            <VBar>
              <ScrollArrow aria-label="Scroll up"><Arrow dir="up" dim /></ScrollArrow>
              <Thumb $vertical />
              <Track $grow={1} />
              <ScrollArrow aria-label="Scroll down"><Arrow dir="down" /></ScrollArrow>
            </VBar>
          </HexPane>
          <StatusBar>
            <ExpertButton aria-label="Expert info" />
            <StatusField $grow={473} $pad={4}>Frame (frame), 1514 bytes</StatusField>
            <StatusField $grow={398} $pad={4}>Packets: 6 Displayed: 6 Marked: 0 Load time: 0:00.000</StatusField>
            <StatusField $grow={171} $pad={3}>
              Profile: Default
              <svg width="12" height="17" viewBox="0 0 12 17" shapeRendering="crispEdges">
                {[[8, 7], [4, 11], [8, 11], [0, 15], [4, 15], [8, 15]].map(([x, y]) => (
                  <path key={`${x}-${y}`} d={`M${x} ${y}h2v2h-2z`} fill="#b8b8b8" />
                ))}
              </svg>
            </StatusField>
          </StatusBar>
        </Client>
      </Window>
    </Desktop>
  );
}
